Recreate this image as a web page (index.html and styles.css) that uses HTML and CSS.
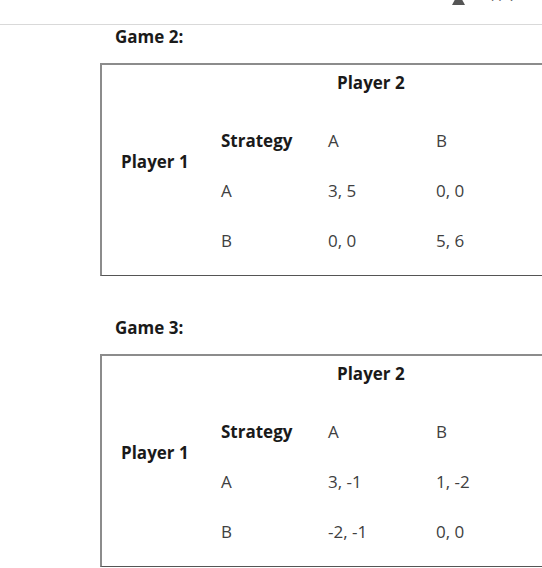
FILE: index.html
```html
<!DOCTYPE html>
<html>
<head>
<meta charset="utf-8">
<link rel="stylesheet" href="styles.css">
</head>
<body>
<div class="topbar">
  <div class="pager">
    <svg class="tri" width="13" height="12" viewBox="0 0 13 12"><polygon points="6.5,0 13,12 0,12" fill="#555"/></svg>
    <span class="pages">4 / 7</span>
  </div>
</div>
<div class="doc">
  <div class="heading">Game 2:</div>
  <div class="game">
    <div class="p2">Player 2</div>
    <div class="p1">Player 1</div>
    <div class="cell strat">Strategy</div>
    <div class="cell">A</div>
    <div class="cell">B</div>
    <div class="cell c2">A</div>
    <div class="cell">3, 5</div>
    <div class="cell">0, 0</div>
    <div class="cell c2">B</div>
    <div class="cell">0, 0</div>
    <div class="cell">5, 6</div>
  </div>
  <div class="heading second">Game 3:</div>
  <div class="game">
    <div class="p2">Player 2</div>
    <div class="p1">Player 1</div>
    <div class="cell strat">Strategy</div>
    <div class="cell">A</div>
    <div class="cell">B</div>
    <div class="cell c2">A</div>
    <div class="cell">3, -1</div>
    <div class="cell">1, -2</div>
    <div class="cell c2">B</div>
    <div class="cell">-2, -1</div>
    <div class="cell">0, 0</div>
  </div>
</div>
</body>
</html>
```
FILE: styles.css
```css
html, body {
  margin: 0;
  padding: 0;
  background: #fff;
}
body {
  font-family: "Open Sans", "Noto Sans", sans-serif;
  font-size: 17px;
  line-height: 24px;
  color: #404040;
}
.topbar {
  height: 24px;
  border-bottom: 1px solid #d9d9d9;
  overflow: hidden;
  display: flex;
  justify-content: flex-end;
}
.pager {
  display: flex;
  align-items: flex-start;
  gap: 22px;
  margin-right: 25px;
}
.tri {
  display: block;
  margin-top: -7px;
}
.pages {
  font-size: 15px;
  line-height: 20px;
  color: #666;
  margin-top: -15px;
}
.doc {
  padding-left: 100px;
}
.heading {
  font-weight: bold;
  color: #1a1a1a;
  padding-left: 15px;
  height: 24px;
  margin-bottom: 14px;
}
.heading.second {
  margin-top: 40px;
}
.game {
  width: 427px;
  border: 2px solid #8c8c8c;
  border-bottom: 1px solid #555;
  padding: 6px 0 22px 19px;
  display: grid;
  grid-template-columns: 100px 107px 108px 1fr;
  grid-template-rows: 32px 24px 24px 24px;
  row-gap: 26px;
}
.p2 {
  grid-column: 1 / -1;
  grid-row: 1;
  padding-left: 216px;
  font-weight: bold;
  color: #1a1a1a;
  align-self: start;
}
.p1 {
  grid-column: 1;
  grid-row: 2 / 4;
  align-self: center;
  margin-bottom: 8px;
  font-weight: bold;
  color: #1a1a1a;
}
.strat {
  grid-column: 2;
  font-weight: bold;
  color: #1a1a1a;
}
.c2 {
  grid-column: 2;
}
.cell {
  white-space: nowrap;
}
```
